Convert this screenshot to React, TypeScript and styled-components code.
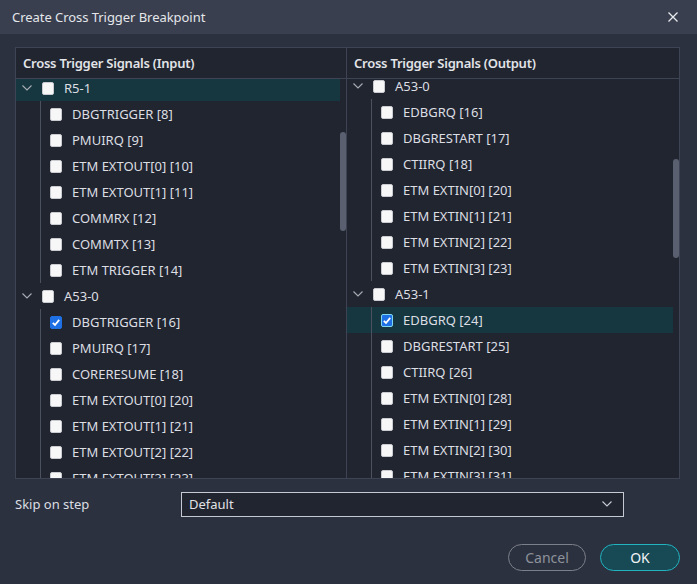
import React from "react";
import styled, { createGlobalStyle } from "styled-components";

const GlobalStyle = createGlobalStyle`
  html, body { margin: 0; padding: 0; background: #2b313f; }
  body { font-family: "Noto Sans", "Open Sans", sans-serif; font-size: 13px; color: #dcdee3; }
  * { box-sizing: border-box; }
`;

const Dialog = styled.div`
  width: 697px;
  height: 584px;
  background: #2b313f;
  display: flex;
  flex-direction: column;
`;

const TitleBar = styled.div`
  height: 34px;
  background: #393f4f;
  display: flex;
  align-items: center;
  justify-content: space-between;
  padding: 0 19px 0 12px;
  color: #e4e6ea;
  font-size: 13px;
  letter-spacing: -0.05px;
`;

const CloseBtn = styled.div`
  width: 10px;
  height: 10px;
  display: flex;
  color: #e8eaee;
`;

const Body = styled.div`
  flex: 1;
  display: flex;
  flex-direction: column;
  padding: 13px 17px 13px 15px;
`;

const Table = styled.div`
  height: 432px;
  border: 1px solid #3e4454;
  background: #21252f;
  display: grid;
  grid-template-columns: 331px 1fr;
`;

const Column = styled.div<{ $divider?: boolean }>`
  display: flex;
  flex-direction: column;
  min-height: 0;
  border-right: ${(p) => (p.$divider ? "1px solid #3e4454" : "none")};
`;

const Header = styled.div`
  height: 31px;
  flex: none;
  border-bottom: 1px solid #3e4454;
  display: flex;
  align-items: center;
  padding-left: 7px;
  font-weight: 600;
  letter-spacing: -0.25px;
  color: #e2e4e8;
`;

const ScrollArea = styled.div`
  position: relative;
  flex: 1;
  overflow: hidden;
`;

const List = styled.div<{ $offset: number }>`
  margin-top: ${(p) => -p.$offset}px;
  padding-right: 6px;
`;

const Thumb = styled.div<{ $top: number }>`
  position: absolute;
  right: 0;
  top: ${(p) => p.$top}px;
  width: 6px;
  height: 99px;
  border-radius: 3px;
  background: #5a6070;
`;

const Row = styled.div<{ $selected?: boolean; $child?: boolean }>`
  height: 26px;
  display: flex;
  align-items: center;
  gap: 10px;
  padding-left: ${(p) => (p.$child ? "34px" : "6px")};
  background: ${(p) => (p.$selected ? "#163740" : "transparent")};
  white-space: nowrap;
  color: #dcdee3;
`;

const Children = styled.div`
  position: relative;
  &::before {
    content: "";
    position: absolute;
    left: 24px;
    top: 0;
    bottom: 0;
    width: 1px;
    background: #4c5160;
  }
`;

const Chevron = styled.span`
  width: 10px;
  height: 6px;
  display: flex;
`;

const Box = styled.span<{ $checked?: boolean; $focus?: boolean }>`
  width: 12px;
  height: 13px;
  flex: none;
  border-radius: 2px;
  display: flex;
  align-items: center;
  justify-content: center;
  background: ${(p) => (p.$checked ? "#1f6fe5" : "#f7f7f7")};
  border: 1px solid ${(p) => (p.$focus ? "#7fd8f0" : p.$checked ? "#1f6fe5" : "#c9cbd0")};
`;

const FormRow = styled.div`
  display: flex;
  align-items: center;
  margin-top: 13px;
  height: 24px;
`;

const Label = styled.div`
  width: 166px;
  color: #dcdee3;
`;

const Select = styled.div`
  width: 443px;
  height: 25px;
  border: 1px solid #c5c9d1;
  background: #212530;
  display: flex;
  align-items: center;
  justify-content: space-between;
  padding: 0 11px 0 7px;
  color: #e0e2e6;
`;

const Footer = styled.div`
  margin-top: auto;
  display: flex;
  justify-content: flex-end;
  gap: 14px;
`;

const Button = styled.div<{ $primary?: boolean }>`
  height: 27px;
  width: ${(p) => (p.$primary ? "80px" : "78px")};
  border-radius: 14px;
  display: flex;
  align-items: center;
  justify-content: center;
  font-size: 14px;
  border: 1px solid ${(p) => (p.$primary ? "#22b3c0" : "#7c808a")};
  background: ${(p) => (p.$primary ? "#174a55" : "transparent")};
  color: ${(p) => (p.$primary ? "#f2f4f6" : "#8e929b")};
`;

const ChevronIcon = ({ color = "#a9adb6" }: { color?: string }) => (
  <svg width="10" height="6" viewBox="0 0 10 6">
    <path d="M0.5 0.5 L5 5 L9.5 0.5" fill="none" stroke={color} strokeWidth="1.1" />
  </svg>
);

const Check = () => (
  <svg width="11" height="11" viewBox="0 0 11 11">
    <path d="M2 5.8 L4.4 8.2 L9 2.6" fill="none" stroke="#fff" strokeWidth="2" />
  </svg>
);

type Item = { label: string; checked?: boolean; selected?: boolean; focus?: boolean };
type Group = { name: string; selected?: boolean; items: Item[] };

const inputGroups: Group[] = [
  {
    name: "R5-1",
    selected: true,
    items: [
      { label: "DBGTRIGGER [8]" },
      { label: "PMUIRQ [9]" },
      { label: "ETM EXTOUT[0] [10]" },
      { label: "ETM EXTOUT[1] [11]" },
      { label: "COMMRX [12]" },
      { label: "COMMTX [13]" },
      { label: "ETM TRIGGER [14]" },
    ],
  },
  {
    name: "A53-0",
    items: [
      { label: "DBGTRIGGER [16]", checked: true },
      { label: "PMUIRQ [17]" },
      { label: "CORERESUME [18]" },
      { label: "ETM EXTOUT[0] [20]" },
      { label: "ETM EXTOUT[1] [21]" },
      { label: "ETM EXTOUT[2] [22]" },
      { label: "ETM EXTOUT[3] [23]" },
    ],
  },
];

const outputGroups: Group[] = [
  {
    name: "A53-0",
    items: [
      { label: "EDBGRQ [16]" },
      { label: "DBGRESTART [17]" },
      { label: "CTIIRQ [18]" },
      { label: "ETM EXTIN[0] [20]" },
      { label: "ETM EXTIN[1] [21]" },
      { label: "ETM EXTIN[2] [22]" },
      { label: "ETM EXTIN[3] [23]" },
    ],
  },
  {
    name: "A53-1",
    items: [
      { label: "EDBGRQ [24]", checked: true, selected: true, focus: true },
      { label: "DBGRESTART [25]" },
      { label: "CTIIRQ [26]" },
      { label: "ETM EXTIN[0] [28]" },
      { label: "ETM EXTIN[1] [29]" },
      { label: "ETM EXTIN[2] [30]" },
      { label: "ETM EXTIN[3] [31]" },
    ],
  },
];

const Tree = ({ groups }: { groups: Group[] }) => (
  <>
    {groups.map((g) => (
      <div key={g.name}>
        <Row $selected={g.selected}>
          <Chevron>
            <ChevronIcon />
          </Chevron>
          <Box />
          <span>{g.name}</span>
        </Row>
        <Children>
          {g.items.map((it) => (
            <Row key={it.label} $child $selected={it.selected}>
              <Box $checked={it.checked} $focus={it.focus}>
                {it.checked && <Check />}
              </Box>
              <span>{it.label}</span>
            </Row>
          ))}
        </Children>
      </div>
    ))}
  </>
);

export default function App() {
  return (
    <>
      <GlobalStyle />
      <Dialog>
        <TitleBar>
          <span>Create Cross Trigger Breakpoint</span>
          <CloseBtn>
            <svg width="10" height="10" viewBox="0 0 10 10">
              <path d="M0.5 0.5 L9.5 9.5 M9.5 0.5 L0.5 9.5" stroke="currentColor" strokeWidth="1.3" />
            </svg>
          </CloseBtn>
        </TitleBar>
        <Body>
          <Table>
            <Column $divider>
              <Header>Cross Trigger Signals (Input)</Header>
              <ScrollArea>
                <List $offset={4}>
                  <Tree groups={inputGroups} />
                </List>
                <Thumb $top={53} />
              </ScrollArea>
            </Column>
            <Column>
              <Header>Cross Trigger Signals (Output)</Header>
              <ScrollArea>
                <List $offset={6}>
                  <Tree groups={outputGroups} />
                </List>
                <Thumb $top={80} />
              </ScrollArea>
            </Column>
          </Table>
          <FormRow>
            <Label>Skip on step</Label>
            <Select>
              <span>Default</span>
              <ChevronIcon color="#c8ccd4" />
            </Select>
          </FormRow>
          <Footer>
            <Button>Cancel</Button>
            <Button $primary>OK</Button>
          </Footer>
        </Body>
      </Dialog>
    </>
  );
}
